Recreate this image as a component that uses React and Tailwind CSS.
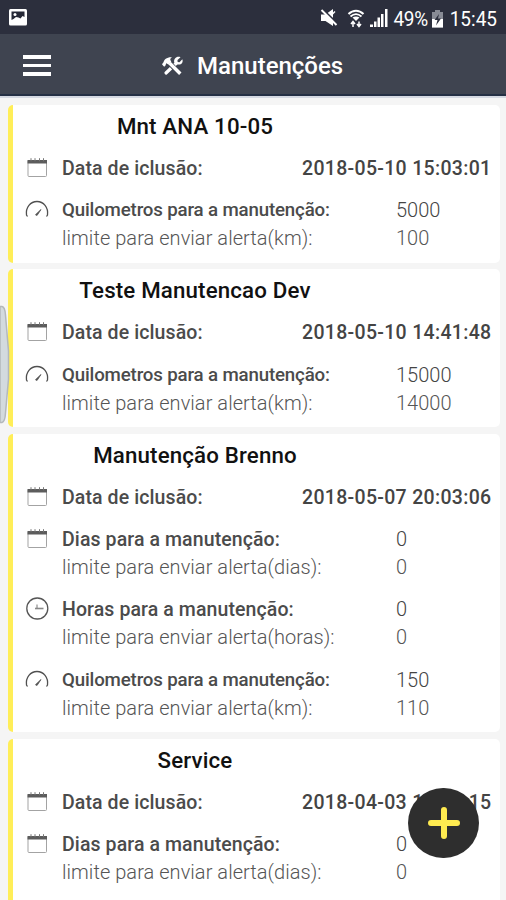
import React from 'react';

const dateRow = (value) => ({ icon: 'calendar', label: 'Data de iclusão:', date: value });

const maintenances = [
  {
    id: 1,
    title: 'Mnt ANA 10-05',
    rows: [
      dateRow('2018-05-10 15:03:01'),
      { icon: 'gauge', label: 'Quilometros para a manutenção:', value: '5000', unit: 'km', limit: '100' },
    ],
  },
  {
    id: 2,
    title: 'Teste Manutencao Dev',
    rows: [
      dateRow('2018-05-10 14:41:48'),
      { icon: 'gauge', label: 'Quilometros para a manutenção:', value: '15000', unit: 'km', limit: '14000' },
    ],
  },
  {
    id: 3,
    title: 'Manutenção Brenno',
    rows: [
      dateRow('2018-05-07 20:03:06'),
      { icon: 'calendar', label: 'Dias para a manutenção:', value: '0', unit: 'dias', limit: '0' },
      { icon: 'clock', label: 'Horas para a manutenção:', value: '0', unit: 'horas', limit: '0' },
      { icon: 'gauge', label: 'Quilometros para a manutenção:', value: '150', unit: 'km', limit: '110' },
    ],
  },
  {
    id: 4,
    title: 'Service',
    rows: [
      dateRow('2018-04-03 11:32:15'),
      { icon: 'calendar', label: 'Dias para a manutenção:', value: '0', unit: 'dias', limit: '0' },
    ],
  },
];

const CalendarIcon = () => (
  <svg width="24" height="24" viewBox="0 0 24 24" fill="none">
    <rect x="3" y="4.500" width="18.500" height="16" rx="1" stroke="#a3a3a3" />
    <path d="M2.500 4h19.500v3.500H2.500z" fill="#5c5c5c" />
    <path d="M6 2.200v3M10 2.200v3M14.500 2.200v3M18.500 2.200v3" stroke="#777" />
  </svg>
);

const GaugeIcon = () => (
  <svg width="24" height="24" viewBox="0 0 24 24" fill="none" stroke="#505050" strokeWidth="1.300">
    <path d="M2.500 18.500 1.500 17C.5 9.500 5.500 3.500 12 3.500s11.500 6 10.500 13.500L21.500 18.500" />
    <path d="M10.500 16.700 16 11.500l-4 6z" fill="#555" strokeWidth="0.800" />
  </svg>
);

const ClockIcon = () => (
  <svg width="24" height="24" viewBox="0 0 24 24" fill="none" stroke="#555">
    <circle cx="12.300" cy="11.500" r="10.500" strokeWidth="1.300" />
    <path d="M12 7.500v4" stroke="#777" />
    <path d="M10 11.500h8.500" stroke="#888" strokeWidth="1.600" />
  </svg>
);

const icons = { calendar: CalendarIcon, gauge: GaugeIcon, clock: ClockIcon };

const ToolsIcon = () => (
  <svg className="ml-[111px]" width="22" height="22" viewBox="0 0 22 22" fill="none" stroke="#fff">
    {/* wrench */}
    <path d="M4 18 14.500 8" strokeWidth="3.200" strokeLinecap="round" />
    <path d="M18.500 2.200 15.500 5v2l2 .2L20.300 4.300c1.200 3-.8 5.500-3.800 5.300l-2.800-.3-1.500-2C11.500 4 14.500.800 18.500 2.200z" fill="#fff" stroke="none" />
    {/* hammer, outlined with the bar colour where it crosses the wrench */}
    <path d="m6.500 7 11 11.500" stroke="#3f4450" strokeWidth="5" />
    <path d="M7.500 8 18.300 18.800" strokeWidth="3.400" />
    <path d="M1 10.500 0 9.300l1.500-2C2 4.500 5 1.800 10 2.200 7.800 3.500 7.800 4.800 9.300 6.500L6.500 9.500 4.200 8.200 3.500 10.500 2.200 11.800z" fill="#fff" stroke="none" />
  </svg>
);

const StatusBar = () => (
  <div className="flex h-[34px] items-center bg-[#2c2f3d] pl-2 pr-[9px] pt-[2px] text-white">
    <svg width="20" height="20" viewBox="0 0 20 20">
      <rect x="1" y="1" width="18" height="16.500" rx="1.500" fill="#fff" />
      <path d="M3.500 3.500h13V9l-2-1-2 2.500-2-1L8 9l-2.500 2-2 1z" fill="#252836" />
      <circle cx="7" cy="6.500" r="1.500" fill="#fff" />
    </svg>
    <div className="ml-auto flex items-center">
      {/* muted */}
      <svg width="18" height="18" viewBox="0 0 18 18">
        <path d="M1 5.500h4.500L13 0v17L5.500 12H1z" fill="#fff" />
        <path d="M2.500 0 18 15" stroke="#2c2f3d" strokeWidth="1.800" />
        <path d="M1.500 1 16.500 16" stroke="#fff" strokeWidth="2" />
        <path d="m12 5.500 3-3" stroke="#fff" strokeWidth="1.500" />
      </svg>
      {/* wifi */}
      <svg className="ml-[9px]" width="18" height="19" viewBox="0 0 18 19" fill="none" stroke="#fff">
        <path d="M1.500 5C6 .5 12 .5 16.500 5" strokeWidth="2" />
        <path d="M3.500 7.500c3.500-3 7.500-3 11 0" strokeWidth="1.800" />
        <path d="m5.500 8.500 3.500 3.500 3.500-3.500c-2-1.500-5-1.500-7 0z" fill="#fff" stroke="none" />
        <path d="M6 18v-5M4 15l2-2.500L8 15M12 12.500v5M10 15l2 2.500 2-2.500" strokeWidth="1.500" />
      </svg>
      {/* signal */}
      <svg className="ml-[5px]" width="18" height="18" viewBox="0 0 18 18" fill="#fff">
        <path d="M0 15.500h3V18H0zM4 12.500h2.500V18H4zM7.500 8.500H10V18H7.500zM11 5h2.500v13H11zM15 0h2.500v18H15z" />
      </svg>
      <span className="ml-[6px] scale-y-110 text-[19px] leading-none tracking-[-0.400px]">49%</span>
      {/* battery */}
      <svg className="ml-[3px]" width="13" height="19" viewBox="0 0 13 19">
        <path d="M4 1h5v2h3v15.500H1V3h3z" fill="#888b95" />
        <path d="M1 10h11v8.500H1z" fill="#fff" />
        <path d="M8 5 3.500 11h3L5 16.500l5-7H7z" fill="#2c2f3d" />
      </svg>
      <span className="ml-[6px] scale-y-110 text-[19px] leading-none">15:45</span>
    </div>
  </div>
);

const Header = () => (
  <header className="flex h-[62px] items-center border-b-2 border-[#253044] bg-[#3f4450] pl-[23px] pt-[3px] text-white">
    <button className="flex flex-col gap-[5px]">
      <span className="h-[3.500px] w-[28px] bg-white" />
      <span className="h-[3.500px] w-[28px] bg-white" />
      <span className="h-[3.500px] w-[28px] bg-white" />
    </button>
    <ToolsIcon />
    <h1 className="ml-[13px] whitespace-nowrap text-[24px] font-medium">Manutenções</h1>
  </header>
);

const Row = ({ row }) => {
  const Icon = icons[row.icon];
  const labelClass =
    row.icon === 'gauge' ? 'text-[18.700px] leading-[26.500px] tracking-[-0.160px]' : 'text-[19.500px] tracking-[0.100px]';

  return (
    <div className="flex">
      <div className="w-[37px] shrink-0 pt-[1px]">
        <Icon />
      </div>
      <div className="flex-1 whitespace-nowrap text-[20px] leading-[28.200px]">
        <div className="flex h-[28.200px]">
          <span className={`w-[334px] font-medium text-[#4b4b4b] ${labelClass}`}>{row.label}</span>
          {row.date ? (
            <span className="-ml-[94px] text-[19.500px] font-medium tracking-[0.310px] text-[#444]">{row.date}</span>
          ) : (
            <span className="font-light leading-[26.500px] text-[#444]">{row.value}</span>
          )}
        </div>
        {row.limit && (
          <div className="flex h-[28.200px] font-light leading-[26.500px] text-[#555]">
            <span className="w-[334px] tracking-[0.050px]">limite para enviar alerta({row.unit}):</span>
            <span>{row.limit}</span>
          </div>
        )}
      </div>
    </div>
  );
};

const MaintenanceCard = ({ item }) => (
  <section className="shrink-0 rounded-[5px] border-l-[5px] border-[#ffee58] bg-white pb-[9px] pl-[12px] pt-[7px] last:pb-8">
    <h2 className="mb-[15px] w-[340px] whitespace-nowrap text-center text-[22.300px] font-medium leading-7 tracking-[0.150px] text-[#111]">
      {item.title}
    </h2>
    <div className="flex flex-col gap-[14px]">
      {item.rows.map((row) => (
        <Row key={row.label} row={row} />
      ))}
    </div>
  </section>
);

const App = () => {
  return (
    <div className="relative flex h-[900px] w-[506px] flex-col overflow-hidden bg-[#f5f5f5] font-['Roboto',sans-serif]">
      <StatusBar />
      <Header />
      <main className="flex min-h-0 flex-1 flex-col gap-[6.800px] overflow-hidden border-t-2 border-[#d5d9e2] pl-2 pr-[6px] pt-[7px]">
        {maintenances.map((item) => (
          <MaintenanceCard key={item.id} item={item} />
        ))}
      </main>

      {/* Edge panel handle */}
      <svg className="absolute left-0 top-[305px]" width="11" height="119" viewBox="0 0 11 119">
        <path d="M0 1.500h2Q5 2 5.500 10L8.500 46V74L5.500 108Q5 117 2 117.500H0z" fill="#d3dade" stroke="#b3b8ba" strokeWidth="1.500" />
      </svg>

      {/* Add button */}
      <button className="absolute left-[408px] top-[788px] flex h-[70px] w-[71px] items-center justify-center rounded-full bg-[#2e2e2e]">
        <svg width="36" height="36" viewBox="0 0 36 36" stroke="#ffeb50" strokeWidth="6" strokeLinecap="round">
          <path d="M18 5v26M5 18h26" />
        </svg>
      </button>
    </div>
  );
};

export default App;
